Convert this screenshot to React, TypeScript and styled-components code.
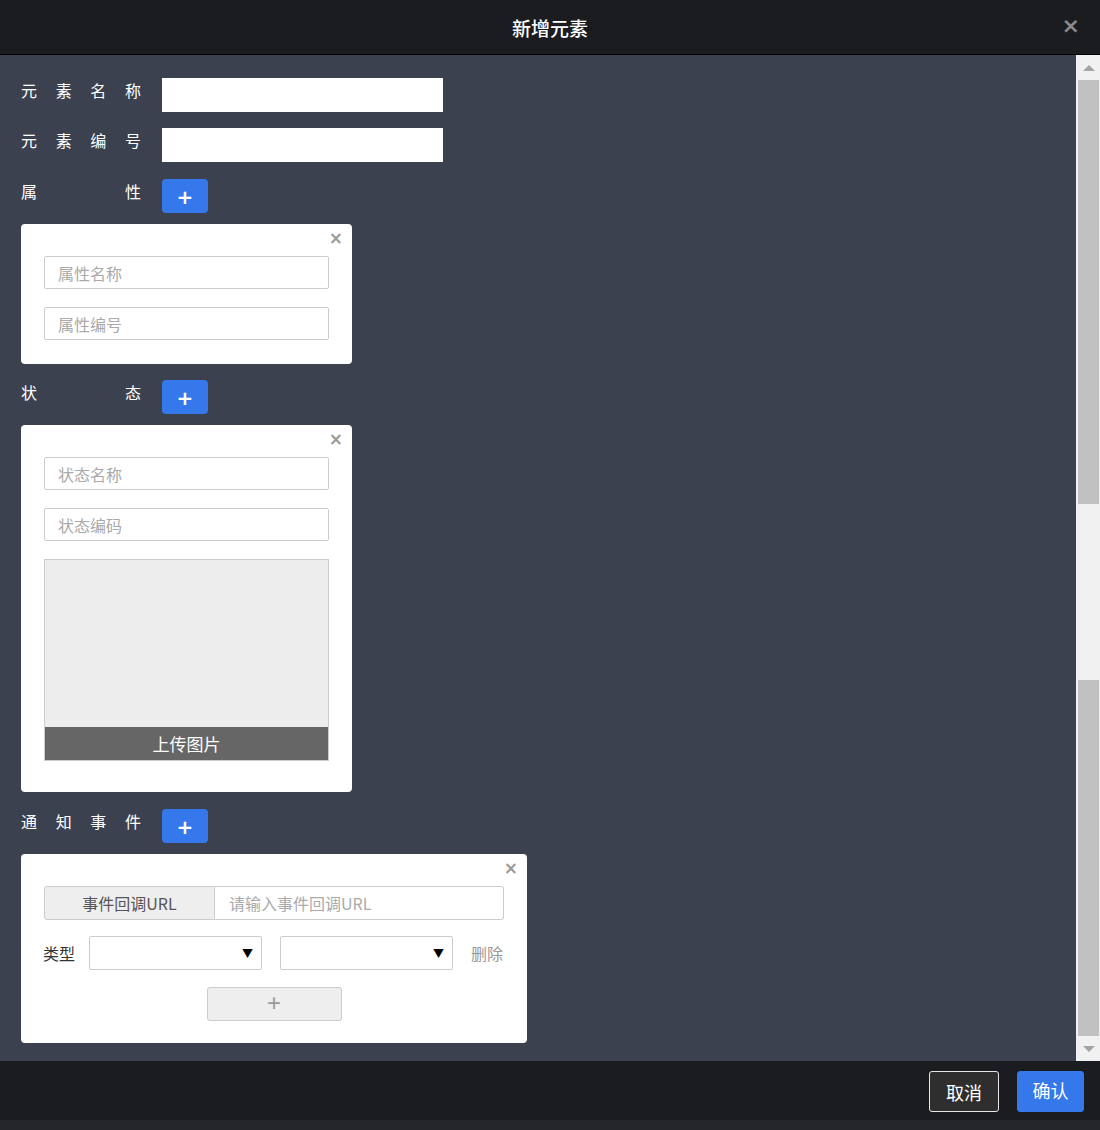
import React from 'react';
import styled, { createGlobalStyle } from 'styled-components';

const GlobalStyle = createGlobalStyle`
  html, body {
    margin: 0;
    padding: 0;
    background: #24262c;
  }
  * {
    box-sizing: border-box;
  }
  body {
    font-family: "Noto Sans CJK SC", "Noto Sans", "Liberation Sans", sans-serif;
  }
`;

const Dialog = styled.div`
  width: 1100px;
  height: 1130px;
  display: flex;
  flex-direction: column;
  background: #24262c;
`;

const Header = styled.div`
  height: 55px;
  flex: none;
  display: flex;
  align-items: center;
  justify-content: center;
  position: relative;
  background: #1b1c20;
  border-bottom: 1px solid #000;
`;

const Title = styled.h1`
  margin: 0;
  font-size: 19px;
  font-weight: 500;
  color: #fff;
  line-height: 1;
`;

const HeaderClose = styled.span`
  position: absolute;
  right: 20px;
  top: 15px;
  font-size: 22px;
  font-weight: 700;
  color: #8a8a8a;
  line-height: 22px;
  font-family: "DejaVu Sans", sans-serif;
`;

const Body = styled.div`
  height: 1006px;
  flex: none;
  display: flex;
  background: #3c4150;
  overflow: hidden;
`;

const Content = styled.div`
  flex: 1;
  padding: 23px 0 0 21px;
`;

const Scrollbar = styled.div`
  width: 24px;
  flex: none;
  display: flex;
  flex-direction: column;
  background: #f1f1f1;
`;

const ArrowCell = styled.div`
  height: 25px;
  display: flex;
  align-items: center;
  justify-content: center;
  padding-left: 2px;
`;

const Arrow = styled.div<{ $down?: boolean }>`
  width: 0;
  height: 0;
  border-left: 6px solid transparent;
  border-right: 6px solid transparent;
  ${(p) =>
    p.$down ? 'border-top: 6px solid #a3a3a3;' : 'border-bottom: 6px solid #a3a3a3;'}
`;

const Thumb = styled.div<{ $h: number }>`
  height: ${(p) => p.$h}px;
  margin-left: 2px;
  width: 21px;
  background: #c1c1c1;
`;

const TrackGap = styled.div<{ $h: number }>`
  height: ${(p) => p.$h}px;
`;

const Row = styled.div<{ $mb: number }>`
  display: flex;
  align-items: flex-start;
  gap: 21px;
  margin-bottom: ${(p) => p.$mb}px;
`;

const Label = styled.div`
  width: 120px;
  display: flex;
  justify-content: space-between;
  padding-top: 2px;
  font-size: 16px;
  line-height: 20px;
  color: #fff;
`;

const DarkInput = styled.div`
  width: 281px;
  height: 34px;
  background: #fff;
`;

const AddButton = styled.button`
  width: 46px;
  height: 34px;
  border: none;
  border-radius: 4px;
  background: #3578ec;
  color: #fff;
  font-size: 20px;
  font-weight: 700;
  line-height: 1;
  padding: 2px 0 0;
  font-family: "DejaVu Sans", sans-serif;
`;

const Card = styled.div<{ $w: number; $pb: number; $mb: number }>`
  position: relative;
  width: ${(p) => p.$w}px;
  background: #fff;
  border-radius: 4px;
  padding: 32px 23px ${(p) => p.$pb}px;
  margin-bottom: ${(p) => p.$mb}px;
  display: flex;
  flex-direction: column;
`;

const CardClose = styled.span`
  position: absolute;
  right: 9px;
  top: 6px;
  font-size: 17px;
  font-weight: 700;
  color: #999;
  line-height: 17px;
  font-family: "DejaVu Sans", sans-serif;
`;

const TextField = styled.div<{ $mb?: number }>`
  height: 33px;
  border: 1px solid #ccc;
  border-radius: 2px;
  padding-left: 13px;
  display: flex;
  align-items: center;
  font-size: 16px;
  color: #aaa;
  margin-bottom: ${(p) => p.$mb ?? 0}px;
`;

const UploadBox = styled.div`
  height: 202px;
  border: 1px solid #ccc;
  background: #ededed;
  display: flex;
  flex-direction: column;
  justify-content: flex-end;
`;

const UploadBar = styled.div`
  height: 33px;
  background: #666;
  color: #fff;
  font-size: 17px;
  display: flex;
  align-items: center;
  justify-content: center;
`;

const UrlGroup = styled.div`
  display: flex;
  height: 34px;
  margin-bottom: 16px;
`;

const Addon = styled.div`
  width: 171px;
  background: #eee;
  border: 1px solid #ccc;
  border-radius: 3px 0 0 3px;
  display: flex;
  align-items: center;
  justify-content: center;
  font-size: 16px;
  color: #555;
`;

const UrlInput = styled.div`
  flex: 1;
  border: 1px solid #ccc;
  border-left: none;
  border-radius: 0 3px 3px 0;
  display: flex;
  align-items: center;
  padding-left: 14px;
  font-size: 16px;
  color: #aaa;
`;

const TypeRow = styled.div`
  display: flex;
  align-items: center;
  height: 34px;
  margin-bottom: 17px;
`;

const TypeLabel = styled.span`
  font-size: 16px;
  color: #333;
  margin-left: -1px;
  margin-right: 14px;
`;

const Select = styled.div<{ $mr: number }>`
  width: 173px;
  height: 34px;
  border: 1px solid #ccc;
  border-radius: 2px;
  margin-right: ${(p) => p.$mr}px;
  display: flex;
  align-items: center;
  justify-content: flex-end;
  padding-right: 8px;
  font-size: 11px;
  color: #000;
`;

const DeleteLink = styled.span`
  font-size: 16px;
  color: #999;
`;

const PlusRow = styled.div`
  display: flex;
  justify-content: center;
`;

const PlusButton = styled.div`
  width: 135px;
  height: 34px;
  background: #eee;
  border: 1px solid #ccc;
  border-radius: 3px;
  display: flex;
  align-items: center;
  justify-content: center;
  font-size: 24px;
  color: #999;
  font-family: "Liberation Sans", sans-serif;
  padding-bottom: 2px;
`;

const Footer = styled.div`
  height: 59px;
  flex: none;
  background: #1b1c20;
  display: flex;
  justify-content: flex-end;
  align-items: flex-start;
  gap: 18px;
  padding: 10px 16px 0 0;
`;

const FooterButton = styled.button<{ $primary?: boolean }>`
  height: 41px;
  width: ${(p) => (p.$primary ? 67 : 70)}px;
  border-radius: 3px;
  border: 1px solid ${(p) => (p.$primary ? '#3578ec' : '#e6e6e6')};
  background: ${(p) => (p.$primary ? '#3578ec' : '#2e2e2e')};
  color: #fff;
  font-size: 18px;
  font-family: inherit;
  padding: 0 0 ${(p) => (p.$primary ? 4 : 0)}px;
`;

const FieldLabel = ({ text }: { text: string }) => (
  <Label>
    {text.split('').map((c, i) => (
      <span key={i}>{c}</span>
    ))}
  </Label>
);

export default function App() {
  return (
    <>
      <GlobalStyle />
      <Dialog>
        <Header>
          <Title>新增元素</Title>
          <HeaderClose>×</HeaderClose>
        </Header>
        <Body>
          <Content>
            <Row $mb={16}>
              <FieldLabel text="元素名称" />
              <DarkInput />
            </Row>
            <Row $mb={17}>
              <FieldLabel text="元素编号" />
              <DarkInput />
            </Row>
            <Row $mb={11}>
              <FieldLabel text="属性" />
              <AddButton>+</AddButton>
            </Row>
            <Card $w={331} $pb={24} $mb={16}>
              <CardClose>×</CardClose>
              <TextField $mb={18}>属性名称</TextField>
              <TextField>属性编号</TextField>
            </Card>
            <Row $mb={11}>
              <FieldLabel text="状态" />
              <AddButton>+</AddButton>
            </Row>
            <Card $w={331} $pb={31} $mb={17}>
              <CardClose>×</CardClose>
              <TextField $mb={18}>状态名称</TextField>
              <TextField $mb={18}>状态编码</TextField>
              <UploadBox>
                <UploadBar>上传图片</UploadBar>
              </UploadBox>
            </Card>
            <Row $mb={11}>
              <FieldLabel text="通知事件" />
              <AddButton>+</AddButton>
            </Row>
            <Card $w={506} $pb={22} $mb={0}>
              <CardClose>×</CardClose>
              <UrlGroup>
                <Addon>事件回调URL</Addon>
                <UrlInput>请输入事件回调URL</UrlInput>
              </UrlGroup>
              <TypeRow>
                <TypeLabel>类型</TypeLabel>
                <Select $mr={18}>▼</Select>
                <Select $mr={18}>▼</Select>
                <DeleteLink>删除</DeleteLink>
              </TypeRow>
              <PlusRow>
                <PlusButton>+</PlusButton>
              </PlusRow>
            </Card>
          </Content>
          <Scrollbar>
            <ArrowCell>
              <Arrow />
            </ArrowCell>
            <Thumb $h={424} />
            <TrackGap $h={176} />
            <Thumb $h={356} />
            <ArrowCell>
              <Arrow $down />
            </ArrowCell>
          </Scrollbar>
        </Body>
        <Footer>
          <FooterButton>取消</FooterButton>
          <FooterButton $primary>确认</FooterButton>
        </Footer>
      </Dialog>
    </>
  );
}
